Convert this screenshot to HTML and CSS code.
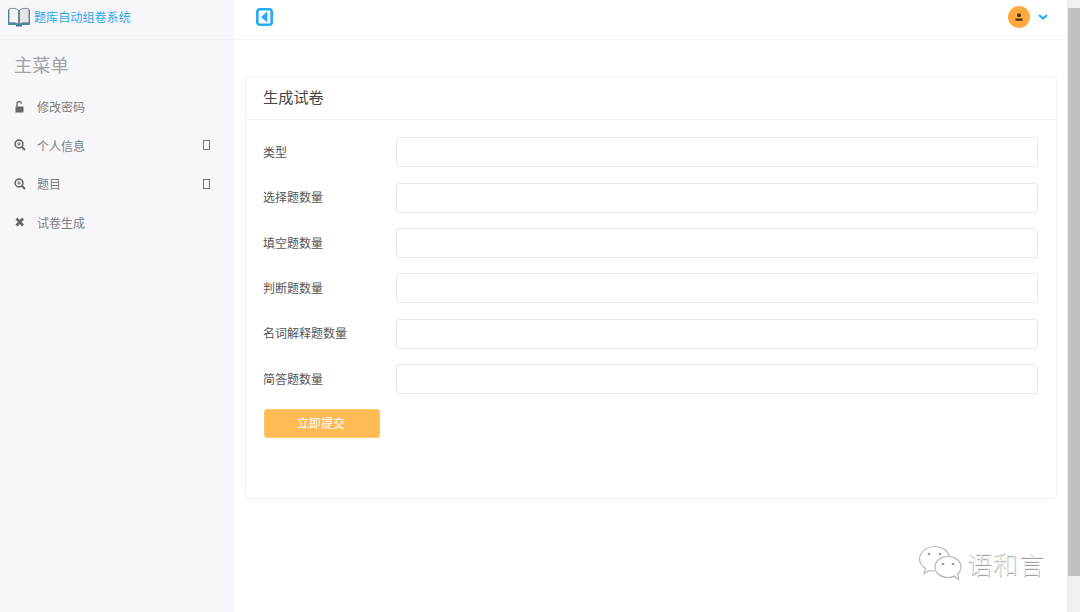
FILE: index.html
```html
<!DOCTYPE html>
<html lang="zh">
<head>
<meta charset="utf-8">
<title>题库自动组卷系统</title>
<link rel="stylesheet" href="styles.css">
</head>
<body>
<div class="app">
  <aside class="sidebar">
    <div class="brand">
      <svg class="brand-icon" viewBox="0 0 24 20" width="24" height="20">
        <path d="M1 3h22v15H1z" fill="#4f87ab"/>
        <path d="M2 2c3-1 7-1 9.500 1v14c-2.500-1.500-6.500-1.500-9.500-1z" fill="#f3f3f1" stroke="#5f7686" stroke-width=".8"/>
        <path d="M22 2c-3-1-7-1-9.500 1v14c2.500-1.500 6.500-1.500 9.500-1z" fill="#e6e6e2" stroke="#5f7686" stroke-width=".8"/>
        <path d="M9 18h6v1.500H9z" fill="#3f7396"/>
      </svg>
      <span class="brand-text">题库自动组卷系统</span>
    </div>
    <h2 class="menu-title">主菜单</h2>
    <nav class="menu">
      <a class="menu-item">
        <svg class="menu-icon" viewBox="0 0 12 12"><path d="M1.500 5.500h8v6h-8z" fill="#666"/><path d="M3 5.500V3a2.200 2.200 0 0 1 4.400-.3" fill="none" stroke="#666" stroke-width="1.400"/></svg>
        <span class="menu-label">修改密码</span>
      </a>
      <a class="menu-item">
        <svg class="menu-icon" viewBox="0 0 12 12"><circle cx="5" cy="5" r="3.900" fill="none" stroke="#666" stroke-width="1.600"/><path d="M7.800 7.800l3.200 3.200" stroke="#666" stroke-width="2"/><path d="M3.200 5h3.600M5 3.200v3.600" stroke="#666" stroke-width="1"/></svg>
        <span class="menu-label">个人信息</span>
        <span class="menu-caret"></span>
      </a>
      <a class="menu-item">
        <svg class="menu-icon" viewBox="0 0 12 12"><circle cx="5" cy="5" r="3.900" fill="none" stroke="#666" stroke-width="1.600"/><path d="M7.800 7.800l3.200 3.200" stroke="#666" stroke-width="2"/><path d="M3.200 5h3.600M5 3.200v3.600" stroke="#666" stroke-width="1"/></svg>
        <span class="menu-label">题目</span>
        <span class="menu-caret"></span>
      </a>
      <a class="menu-item">
        <svg class="menu-icon" viewBox="0 0 12 12"><path d="M2.500 2.500l6.500 7M9 2.500l-6.500 7" stroke="#666" stroke-width="2.600"/></svg>
        <span class="menu-label">试卷生成</span>
      </a>
    </nav>
  </aside>
  <main class="main">
    <header class="topbar">
      <svg class="toggle" viewBox="0 0 17 18" width="17" height="18">
        <rect x="1.300" y="1.300" width="14.400" height="15.400" rx="2.500" fill="#fff" stroke="#22adf6" stroke-width="2.600"/>
        <path d="M11.300 3.500v11L5 9z" fill="#22adf6"/>
      </svg>
      <div class="user">
        <span class="avatar">
          <svg viewBox="0 0 10 10" width="10" height="10"><circle cx="5" cy="3.200" r="2" fill="#4a3418"/><path d="M1.500 6.500h7v2.300h-7z" fill="#4a3418"/></svg>
        </span>
        <svg class="chevron" viewBox="0 0 10 6" width="10" height="6"><path d="M1 1l4 3.600L9 1" fill="none" stroke="#22adf6" stroke-width="2"/></svg>
      </div>
    </header>
    <section class="card">
      <h3 class="card-title">生成试卷</h3>
      <form class="form">
        <div class="row"><label class="row-label">类型</label><input class="row-input"></div>
        <div class="row"><label class="row-label">选择题数量</label><input class="row-input"></div>
        <div class="row"><label class="row-label">填空题数量</label><input class="row-input"></div>
        <div class="row"><label class="row-label">判断题数量</label><input class="row-input"></div>
        <div class="row"><label class="row-label">名词解释题数量</label><input class="row-input"></div>
        <div class="row"><label class="row-label">简答题数量</label><input class="row-input"></div>
        <button class="submit" type="button">立即提交</button>
      </form>
    </section>
  </main>
  <div class="scrollbar">
    <span class="scroll-arrow"></span>
    <span class="scroll-thumb"></span>
  </div>
</div>
<div class="watermark">
  <svg class="wm-icon" viewBox="0 0 46 36" width="46" height="36">
    <path d="M17 1.500C9 1.500 1.500 7 1.500 14c0 4 2.500 7 6 9.500L6 28.500l5.500-3c1.500.4 3 .6 5 .6" fill="#fff" stroke="#bcbcbc" stroke-width="1.200"/>
    <path d="M17 1.500c7 0 13 4 14.500 10" fill="none" stroke="#bcbcbc" stroke-width="1.200"/>
    <ellipse cx="30" cy="22" rx="13" ry="10.500" fill="#fff" stroke="#b5b5b5" stroke-width="1.200"/>
    <path d="M36 31l4.500 3.500-.5-6" fill="#fff" stroke="#b5b5b5" stroke-width="1.200"/>
    <circle cx="11" cy="9" r="1.300" fill="#999"/><circle cx="22" cy="9" r="1.300" fill="#999"/>
    <circle cx="25" cy="19" r="1.300" fill="#999"/><circle cx="35" cy="19" r="1.300" fill="#999"/>
  </svg>
  <span class="wm-text">语和言</span>
</div>
</body>
</html>
```
FILE: styles.css
```css
* { box-sizing: border-box; }
html, body { margin: 0; height: 100%; overflow: hidden; }
body {
  font-family: "Liberation Sans", "Noto Sans CJK SC", sans-serif;
  font-size: 13px;
  color: #555;
  background: #fff;
}
.app { display: flex; height: 612px; }
.sidebar { width: 234px; flex: none; background: #f7f7fb; }
.brand {
  display: flex;
  align-items: center;
  gap: 3px;
  height: 40px;
  padding: 0 0 6px 7px;
  border-bottom: 1px solid #f1f1f4;
}
.brand-icon { flex: none; }
.brand-text { font-size: 12.100px; color: #2aa5e8; }
.menu-title {
  margin: 0;
  padding: 14px 0 0 14px;
  height: 47.500px;
  font-size: 18.300px;
  line-height: 24px;
  font-weight: 400;
  color: #a3a3a3;
}
.menu { display: flex; flex-direction: column; }
.menu-item {
  display: flex;
  align-items: center;
  height: 38.500px;
  padding: 0 24px 0 14px;
  color: #7d7d7d;
  font-size: 12px;
}
.menu-icon { width: 12px; height: 12px; flex: none; margin-right: 11px; }
.menu-label { flex: 1; }
.menu-caret { width: 7px; height: 10px; border: 1px solid #777; }
.main { flex: 1; min-width: 0; background: #fff; }
.topbar {
  display: flex;
  align-items: center;
  justify-content: space-between;
  height: 40px;
  padding: 0 19px 5px 22px;
  border-bottom: 1px solid #f5f5f5;
}
.toggle { display: block; }
.user { display: flex; align-items: center; gap: 8px; }
.avatar {
  display: flex;
  align-items: center;
  justify-content: center;
  width: 22px;
  height: 22px;
  border-radius: 50%;
  background: #ffa940;
}
.card {
  margin: 36px 10px 0 11px;
  height: 423px;
  background: #fff;
  border: 1px solid #f2f2f2;
  border-radius: 4px;
}
.card-title {
  margin: 0;
  height: 43px;
  padding: 0 17px;
  font-size: 15.200px;
  line-height: 42px;
  font-weight: 400;
  color: #444;
  border-bottom: 1px solid #f2f2f2;
}
.form { padding: 17.300px 18px 0 17px; }
.row { display: flex; align-items: center; height: 30px; margin-bottom: 15.400px; }
.row-label { width: 133px; flex: none; padding-bottom: 2px; font-size: 12px; color: #555; }
.row-input {
  flex: 1;
  min-width: 0;
  height: 30px;
  border: 1px solid #e8e8e8;
  border-radius: 3px;
  background: #fff;
}
.submit {
  display: block;
  width: 116px;
  height: 29px;
  margin: -1px 0 0 1px;
  padding: 0 2px 1px 0;
  border: 1px solid #ffc66d;
  border-radius: 3px;
  background: #ffba54;
  color: #fff;
  font: inherit;
  font-size: 12px;
}
.scrollbar {
  width: 13px;
  flex: none;
  display: flex;
  flex-direction: column;
  background: #f1f1f1;
  border-left: 1px solid #ececec;
}
.scroll-arrow { height: 8px; flex: none; }
.scroll-thumb { height: 568px; background: #c1c1c1; }
.watermark {
  position: absolute;
  left: 918px;
  top: 545px;
  display: flex;
  align-items: center;
  gap: 3px;
}
.wm-icon { display: block; }
.wm-text {
  font-size: 25px;
  font-weight: 300;
  letter-spacing: 1px;
  color: #f0f0f0;
  text-shadow: 0.6px 0.6px 0.6px #a0a0a0;
}
```
